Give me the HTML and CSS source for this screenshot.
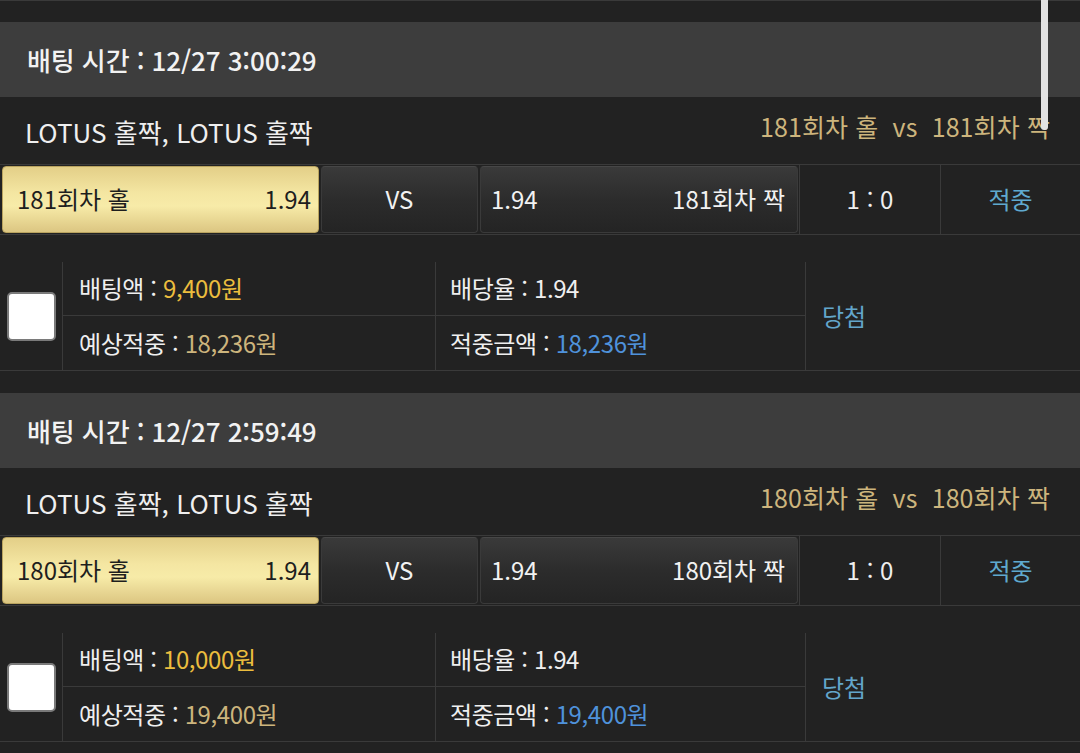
FILE: index.html
```html
<!DOCTYPE html>
<html lang="ko">
<head>
<meta charset="utf-8">
<title>배팅 내역</title>
<link rel="stylesheet" href="styles.css">
</head>
<body>
<div class="page">
  <div class="prev-line"></div>

  <section class="bet">
    <div class="bet-head">배팅 시간 : 12/27 3:00:29</div>
    <div class="bet-title">
      <span class="game">LOTUS 홀짝, LOTUS 홀짝</span>
      <span class="match">181회차 홀 &nbsp;vs &nbsp;181회차 짝</span>
    </div>
    <div class="bet-row">
      <div class="btn btn-gold"><span>181회차 홀</span><span>1.94</span></div>
      <div class="btn btn-dark btn-vs">VS</div>
      <div class="btn btn-dark"><span>1.94</span><span>181회차 짝</span></div>
      <div class="cell cell-score">1 : 0</div>
      <div class="cell cell-result">적중</div>
    </div>
    <div class="detail">
      <div class="chk-cell"><span class="chk"></span></div>
      <div class="d d-a1">배팅액 : <span class="amt">9,400원</span></div>
      <div class="d d-b1">배당율 : 1.94</div>
      <div class="d-c">당첨</div>
      <div class="d d-a2">예상적중 : <span class="exp">18,236원</span></div>
      <div class="d d-b2">적중금액 : <span class="win">18,236원</span></div>
    </div>
  </section>

  <section class="bet">
    <div class="bet-head">배팅 시간 : 12/27 2:59:49</div>
    <div class="bet-title">
      <span class="game">LOTUS 홀짝, LOTUS 홀짝</span>
      <span class="match">180회차 홀 &nbsp;vs &nbsp;180회차 짝</span>
    </div>
    <div class="bet-row">
      <div class="btn btn-gold"><span>180회차 홀</span><span>1.94</span></div>
      <div class="btn btn-dark btn-vs">VS</div>
      <div class="btn btn-dark"><span>1.94</span><span>180회차 짝</span></div>
      <div class="cell cell-score">1 : 0</div>
      <div class="cell cell-result">적중</div>
    </div>
    <div class="detail">
      <div class="chk-cell"><span class="chk"></span></div>
      <div class="d d-a1">배팅액 : <span class="amt">10,000원</span></div>
      <div class="d d-b1">배당율 : 1.94</div>
      <div class="d-c">당첨</div>
      <div class="d d-a2">예상적중 : <span class="exp">19,400원</span></div>
      <div class="d d-b2">적중금액 : <span class="win">19,400원</span></div>
    </div>
  </section>

  <div class="scrollbar"></div>
</div>
</body>
</html>
```

FILE: styles.css
```css
* { box-sizing: border-box; }

html, body {
  margin: 0;
  padding: 0;
  background: #222222;
  height: 753px;
  overflow: hidden;
}

body {
  font-family: "Noto Sans CJK KR", "Noto Sans", sans-serif;
  color: #efefef;
  font-size: 24px;
  line-height: 1.2;
}

.page {
  position: relative;
  width: 1080px;
}

.prev-line {
  height: 1px;
  background: #3a3a3a;
}

.bet {
  margin-top: 22px;
}
.prev-line + .bet {
  margin-top: 21px;
}

.bet-head {
  height: 75px;
  background: #3d3d3d;
  display: flex;
  align-items: center;
  padding-left: 27px;
  font-size: 26px;
  font-weight: 500;
  color: #f2f2f2;
  letter-spacing: -0.1px;
}

.bet-title {
  height: 67px;
  display: flex;
  align-items: center;
  justify-content: space-between;
  padding: 0 30px 0 25px;
}
.bet-title .game {
  font-size: 26px;
  padding-top: 3px;
}
.bet-title .match {
  font-size: 25px;
  color: #cdb57d;
  padding-bottom: 9px;
  letter-spacing: 0.1px;
}

.bet-row {
  display: flex;
  height: 71px;
  border-top: 1px solid #3a3a3a;
  border-bottom: 1px solid #3a3a3a;
  padding-left: 2px;
}

.btn {
  margin: 1px 0;
  height: 67px;
  border-radius: 4px;
  display: flex;
  align-items: center;
  justify-content: space-between;
}
.btn + .btn { margin-left: 2px; }

.btn-gold {
  width: 317px;
  padding: 0 7px 0 14px;
  color: #1e1e1e;
  border: 1px solid #b9a35f;
  background: linear-gradient(to bottom, #e3cf88 0%, #f4e6a2 40%, #f7eba8 60%, #dcc682 100%);
}

.btn-dark {
  border: 1px solid #3a3a3a;
  border-top-color: #474747;
  background: linear-gradient(to bottom, #3a3a3a 0%, #2c2c2c 50%, #242424 100%);
  color: #f2f2f2;
}
.btn-vs {
  width: 157px;
  justify-content: center;
}
.btn-dark:not(.btn-vs) {
  width: 318px;
  padding: 0 12px 0 10px;
}

.cell {
  display: flex;
  align-items: center;
  justify-content: center;
  border-left: 1px solid #3a3a3a;
}
.cell-score {
  margin-left: 1px;
  width: 141px;
}
.cell-result {
  flex: 1;
  color: #5fa9cf;
}

.detail {
  margin-top: 27px;
  display: grid;
  grid-template-columns: 63px 373px 370px 1fr;
  grid-template-rows: 54px 54px;
  border-bottom: 1px solid #3a3a3a;
}

.chk-cell {
  grid-row: 1 / 3;
  grid-column: 1;
  border-right: 1px solid #3a3a3a;
  display: flex;
  align-items: center;
  padding-left: 7px;
}
.chk {
  display: block;
  width: 49px;
  height: 49px;
  background: #ffffff;
  border: 2px solid #7a7a7a;
  border-radius: 5px;
}

.d {
  display: flex;
  align-items: center;
  white-space: pre;
  letter-spacing: -0.4px;
}
.d-a1, .d-a2 {
  padding-left: 16px;
  border-right: 1px solid #3a3a3a;
}
.d-b1, .d-b2 {
  padding-left: 14px;
  border-right: 1px solid #3a3a3a;
}
.d-a1, .d-b1 {
  border-bottom: 1px solid #3a3a3a;
}
.d-a1 { grid-row: 1; grid-column: 2; }
.d-b1 { grid-row: 1; grid-column: 3; }
.d-a2 { grid-row: 2; grid-column: 2; }
.d-b2 { grid-row: 2; grid-column: 3; }

.d-c {
  grid-row: 1 / 3;
  grid-column: 4;
  display: flex;
  align-items: center;
  padding-left: 16px;
  color: #63a6cb;
}

.amt { color: #ecbd3e; }
.exp { color: #cdb57d; }
.win { color: #4f92db; }

.scrollbar {
  position: absolute;
  left: 1041px;
  top: 0;
  width: 7px;
  height: 130px;
  background: #e2e2e2;
  border-radius: 0 0 3px 3px;
}
```
